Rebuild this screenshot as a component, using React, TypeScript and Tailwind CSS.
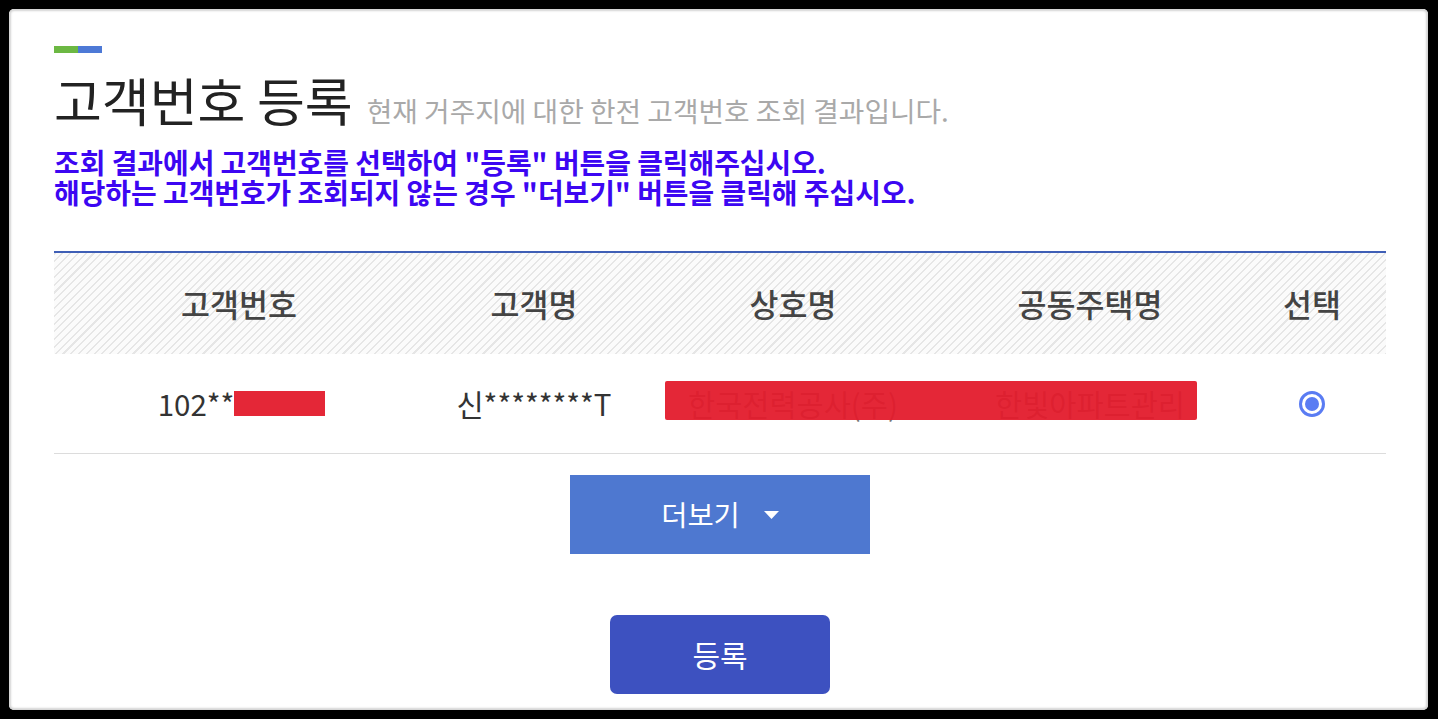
import { useState } from "react";

type Row = {
  customerNo: string;
  customerName: string;
  company: string;
  apartment: string;
};

const rows: Row[] = [
  {
    customerNo: "102**",
    customerName: "신********T",
    company: "한국전력공사(주)",
    apartment: "한빛아파트관리",
  },
];

const cols = [
  { label: "고객번호", w: "w-[370px]" },
  { label: "고객명", w: "w-[220px]" },
  { label: "상호명", w: "w-[298px]" },
  { label: "공동주택명", w: "w-[296px]" },
  { label: "선택", w: "flex-1" },
];

export default function App() {
  const [selected, setSelected] = useState(0);

  return (
    <div
      className="w-[1438px] h-[719px] bg-black pt-[9px] pl-[9px] pr-[10px] pb-[9px]"
      style={{ fontFamily: '"Noto Sans CJK KR", "Noto Sans", sans-serif' }}
    >
      <div className="h-full bg-white rounded-[5px] shadow-[inset_0_0_2px_2px_#d4d4d4] pl-[45px] pr-[42px] pt-[37px]">
        {/* title accent */}
        <div className="flex h-[7px]">
          <div className="w-[24px] bg-[#6cb843]" />
          <div className="w-[24px] bg-[#4d79d6]" />
        </div>

        <div className="flex items-baseline gap-[14px] mt-[21px]">
          <h1 className="text-[52px] leading-none text-[#222] font-normal">
            고객번호 등록
          </h1>
          <span className="text-[27.8px] leading-none text-[#a9a9a9]">
            현재 거주지에 대한 한전 고객번호 조회 결과입니다.
          </span>
        </div>

        <div className="mt-[21px] text-[27.9px] leading-[30px] font-bold text-[#3c06f2]">
          <p>조회 결과에서 고객번호를 선택하여 "등록" 버튼을 클릭해주십시오.</p>
          <p>해당하는 고객번호가 조회되지 않는 경우 "더보기" 버튼을 클릭해 주십시오.</p>
        </div>

        {/* result table */}
        <div className="mt-[44px] border-t-2 border-[#3f5fb6]">
          <div className="flex h-[101px] items-center bg-[repeating-linear-gradient(135deg,#e6e6e6_0px,#e6e6e6_1.5px,#fbfbfb_1.5px,#fbfbfb_5.5px)]">
            {cols.map((c) => (
              <div
                key={c.label}
                className={`${c.w} text-center text-[31.5px] font-medium text-[#444]`}
              >
                {c.label}
              </div>
            ))}
          </div>

          {rows.map((r, i) => (
            <div
              key={i}
              className="relative flex h-[100px] items-center border-b border-[#dcdcdc] text-[29.5px] text-[#333]"
            >
              <div className="w-[370px] text-center pl-[5px]">
                <span>
                  {r.customerNo}
                  <span className="inline-block w-[91px] h-[25px] align-baseline bg-[#e31b2c] opacity-95" />
                </span>
              </div>
              <div className="w-[220px] text-center">{r.customerName}</div>
              <div className="w-[298px] text-center text-[#777]">{r.company}</div>
              <div className="w-[296px] text-center text-[#777]">{r.apartment}</div>
              <div className="flex-1 flex justify-center">
                <button
                  onClick={() => setSelected(i)}
                  className="w-[26px] h-[26px] rounded-full border-[3px] border-[#5a7cf3] flex items-center justify-center"
                >
                  {selected === i && (
                    <span className="w-[14px] h-[14px] rounded-full bg-[#5a7cf3]" />
                  )}
                </button>
              </div>

              {/* redaction over company / apartment */}
              <div className="absolute left-[611px] top-[27px] w-[532px] h-[39px] bg-[#e31b2c] opacity-95 rounded-[2px]" />
            </div>
          ))}
        </div>

        <div className="flex justify-center mt-[21px]">
          <button className="w-[300px] h-[79px] bg-[#4e78d0] text-white text-[28.5px] flex items-center justify-center gap-[24px]">
            <span>더보기</span>
            <svg width="15" height="8" viewBox="0 0 15 8">
              <path d="M0 0 L15 0 L7.5 8 Z" fill="#fff" />
            </svg>
          </button>
        </div>

        <div className="flex justify-center mt-[61px]">
          <button className="w-[220px] h-[79px] bg-[#3d51c0] rounded-[7px] text-white text-[30px]">
            등록
          </button>
        </div>
      </div>
    </div>
  );
}
